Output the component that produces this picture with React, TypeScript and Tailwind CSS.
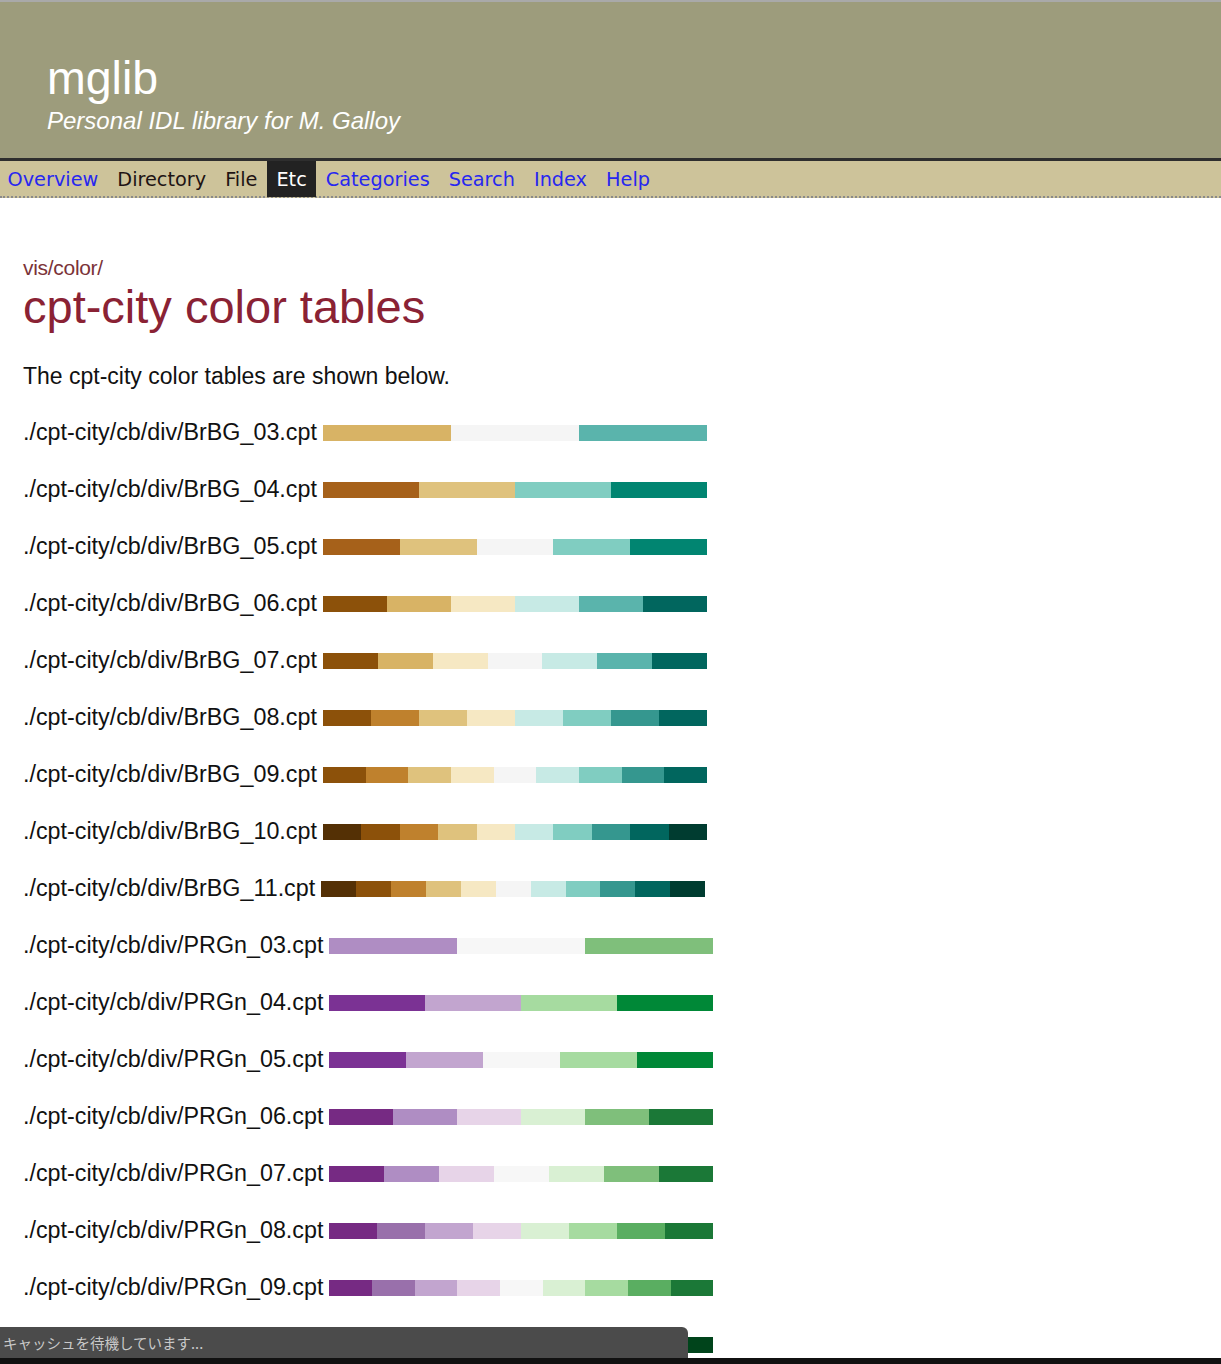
import type { FC } from "react";

interface ITable {
  name: string;
  colors: string[];
}

const tables: ITable[] = [
  { name: "BrBG_03", colors: ["#d8b365", "#f5f5f5", "#5ab4ac"] },
  { name: "BrBG_04", colors: ["#a6611a", "#dfc27d", "#80cdc1", "#018571"] },
  { name: "BrBG_05", colors: ["#a6611a", "#dfc27d", "#f5f5f5", "#80cdc1", "#018571"] },
  { name: "BrBG_06", colors: ["#8c510a", "#d8b365", "#f6e8c3", "#c7eae5", "#5ab4ac", "#01665e"] },
  { name: "BrBG_07", colors: ["#8c510a", "#d8b365", "#f6e8c3", "#f5f5f5", "#c7eae5", "#5ab4ac", "#01665e"] },
  {
    name: "BrBG_08",
    colors: ["#8c510a", "#bf812d", "#dfc27d", "#f6e8c3", "#c7eae5", "#80cdc1", "#35978f", "#01665e"],
  },
  {
    name: "BrBG_09",
    colors: ["#8c510a", "#bf812d", "#dfc27d", "#f6e8c3", "#f5f5f5", "#c7eae5", "#80cdc1", "#35978f", "#01665e"],
  },
  {
    name: "BrBG_10",
    colors: ["#543005", "#8c510a", "#bf812d", "#dfc27d", "#f6e8c3", "#c7eae5", "#80cdc1", "#35978f", "#01665e", "#003c30"],
  },
  {
    name: "BrBG_11",
    colors: [
      "#543005", "#8c510a", "#bf812d", "#dfc27d", "#f6e8c3", "#f5f5f5",
      "#c7eae5", "#80cdc1", "#35978f", "#01665e", "#003c30",
    ],
  },
  { name: "PRGn_03", colors: ["#af8dc3", "#f7f7f7", "#7fbf7b"] },
  { name: "PRGn_04", colors: ["#7b3294", "#c2a5cf", "#a6dba0", "#008837"] },
  { name: "PRGn_05", colors: ["#7b3294", "#c2a5cf", "#f7f7f7", "#a6dba0", "#008837"] },
  { name: "PRGn_06", colors: ["#762a83", "#af8dc3", "#e7d4e8", "#d9f0d3", "#7fbf7b", "#1b7837"] },
  { name: "PRGn_07", colors: ["#762a83", "#af8dc3", "#e7d4e8", "#f7f7f7", "#d9f0d3", "#7fbf7b", "#1b7837"] },
  {
    name: "PRGn_08",
    colors: ["#762a83", "#9970ab", "#c2a5cf", "#e7d4e8", "#d9f0d3", "#a6dba0", "#5aae61", "#1b7837"],
  },
  {
    name: "PRGn_09",
    colors: ["#762a83", "#9970ab", "#c2a5cf", "#e7d4e8", "#f7f7f7", "#d9f0d3", "#a6dba0", "#5aae61", "#1b7837"],
  },
  {
    name: "PRGn_10",
    colors: ["#40004b", "#762a83", "#9970ab", "#c2a5cf", "#e7d4e8", "#d9f0d3", "#a6dba0", "#5aae61", "#1b7837", "#00441b"],
  },
  {
    name: "PRGn_11",
    colors: [
      "#40004b", "#762a83", "#9970ab", "#c2a5cf", "#e7d4e8", "#f7f7f7",
      "#d9f0d3", "#a6dba0", "#5aae61", "#1b7837", "#00441b",
    ],
  },
];

const navItems = [
  { label: "Overview", link: true },
  { label: "Directory", link: false },
  { label: "File", link: false },
  { label: "Etc", link: false, selected: true },
  { label: "Categories", link: true },
  { label: "Search", link: true },
  { label: "Index", link: true },
  { label: "Help", link: true },
];

const ColorBar: FC<{ colors: string[] }> = ({ colors }) => (
  <div className="ml-[6px] flex h-[16px] w-[384px]">
    {colors.map((c, i) => (
      <div key={i} className="h-full flex-1" style={{ backgroundColor: c }} />
    ))}
  </div>
);

const App: FC = () => {
  return (
    <div className="relative h-[1364px] w-full overflow-hidden bg-white font-['Liberation_Sans',Arial,sans-serif]">
      {/* header */}
      <header className="h-[158px] border-t-2 border-[#a9a9a9] bg-[#9d9c7c] pl-[47px] pt-[53px] text-white">
        <h1 className="text-[46.5px] leading-none">mglib</h1>
        <p className="mt-[7px] text-[24px] italic leading-none">Personal IDL library for M. Galloy</p>
      </header>
      <div className="h-[3px] bg-[#2e2e2e]" />
      <nav className="h-[37px] border-b-2 border-dotted border-[#8a8a8a] bg-[#cdc39a] font-['DejaVu_Sans',Verdana,sans-serif] text-[19.3px] leading-[35px]">
        <div className="-ml-[2px] flex">
          {navItems.map((item) => (
            <span
              key={item.label}
              className={
                item.selected
                  ? "bg-[#222222] px-[9.5px] pt-[1px] text-white"
                  : item.link
                    ? "px-[9.5px] pt-[1px] text-[#2727f0]"
                    : "px-[9.5px] pt-[1px] text-[#1e1414]"
              }
            >
              {item.label}
            </span>
          ))}
        </div>
      </nav>

      {/* content */}
      <main className="px-[23px] pt-[59px] text-[#111]">
        <div className="text-[21px] leading-none tracking-[-0.3px] text-[#7b3338]">vis/color/</div>
        <h2 className="mt-[5px] text-[47px] leading-none text-[#8a2234]">cpt-city color tables</h2>
        <p className="mt-[35px] text-[23px] leading-none">The cpt-city color tables are shown below.</p>
        <div className="mt-[16px] flex flex-col">
          {tables.map((t) => (
            <div key={t.name} className="flex h-[57px] items-center">
              <span className="text-[23.3px] leading-none">./cpt-city/cb/div/{t.name}.cpt</span>
              <ColorBar colors={t.colors} />
            </div>
          ))}
        </div>
      </main>

      {/* browser status bubble */}
      <div className="absolute bottom-[6px] left-0 flex h-[31px] w-[688px] items-center rounded-tr-[6px] bg-[#4b4b4b] pl-[3px] font-['Noto_Sans_CJK_JP',sans-serif] text-[14.5px] text-[#c9c9c9]">
        キャッシュを待機しています...
      </div>
      <div className="absolute bottom-0 left-0 h-[6px] w-full bg-[#111]" />
    </div>
  );
};

export default App;
